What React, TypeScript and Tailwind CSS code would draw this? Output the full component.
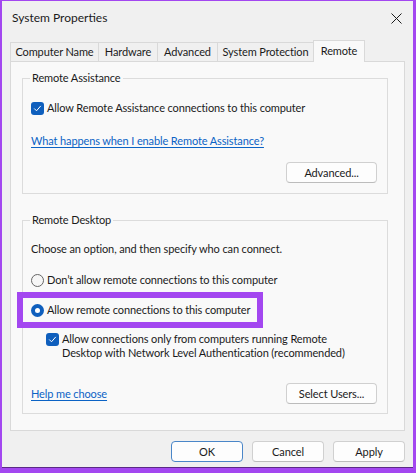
import React from 'react';

const FONT = "font-['Lato','Liberation_Sans',sans-serif]";

const TABS = [
  { label: 'Computer Name', width: 'w-[88px]' },
  { label: 'Hardware', width: 'w-[59px]' },
  { label: 'Advanced', width: 'w-[60px]' },
  { label: 'System Protection', width: 'w-[96px]' },
];

function CheckBox() {
  return (
    <span className="flex h-[13px] w-[13px] shrink-0 items-center justify-center rounded-[3px] bg-[#0f5fbd]">
      <svg width="9" height="9" viewBox="0 0 9 9" fill="none">
        <path d="M1.5 4.8 L3.5 6.8 L7.5 2.2" stroke="#ffffff" strokeWidth="1" strokeLinecap="round" strokeLinejoin="round" />
      </svg>
    </span>
  );
}

function Radio({ checked }: { checked?: boolean }) {
  if (checked) {
    return (
      <span className="flex h-[13px] w-[13px] shrink-0 items-center justify-center rounded-full bg-[#0f5fbd]">
        <span className="h-[5px] w-[5px] rounded-full bg-white" />
      </span>
    );
  }
  return <span className="h-[13px] w-[13px] shrink-0 rounded-full border border-[#666666] bg-[#f6f6f6]" />;
}

function Button({ children, primary }: { children: React.ReactNode; primary?: boolean }) {
  return (
    <button
      className={
        'flex h-[21px] w-full items-center justify-center rounded-[4px] border bg-[#fdfdfd] text-[#1b1b1b] ' +
        (primary ? 'border-[#4a86c8]' : 'border-[#d0d0d0] border-b-[#bcbcbc]')
      }
    >
      {children}
    </button>
  );
}

export default function App() {
  return (
    <div className={`h-[473px] w-[416px] bg-[#a347f0] pt-[1px] pl-[2px] pr-[3px] pb-[5px] ${FONT}`}>
      <div className="flex h-full flex-col border-b border-[#5b2a86] bg-[#f0f0f0] text-[11px] leading-[16px] tracking-[-0.12px] text-[#1b1b1b]">
        {/* title bar */}
        <div className="flex h-[33px] items-center justify-between pl-[10px] pr-[10px] pt-[1px]">
          <span className="text-[12px] tracking-normal">System Properties</span>
          <svg width="11" height="11" viewBox="0 0 11 11" className="mr-[1px]">
            <path d="M0.5 0.5 L10.5 10.5 M10.5 0.5 L0.5 10.5" stroke="#1b1b1b" strokeWidth="1" />
          </svg>
        </div>

        {/* tabs */}
        <div className="mt-[6px] flex h-[21px] items-end whitespace-nowrap pl-[8px]">
          {TABS.map((t) => (
            <div
              key={t.label}
              className={`flex h-[19px] items-center justify-center border border-b-0 border-r-0 border-[#d9d9d9] bg-[#f0f0f0] ${t.width}`}
            >
              {t.label}
            </div>
          ))}
          <div className="relative -mb-[1px] flex h-[22px] w-[52px] items-start justify-center border border-b-0 border-[#d9d9d9] bg-[#f9f9f9] pt-[2px]">
            Remote
          </div>
        </div>

        {/* panel */}
        <div className="mx-[8px] flex h-[370px] flex-col border border-[#d9d9d9] bg-[#f9f9f9] pl-[11px] pr-[16px] pt-[8px]">
          <fieldset className="h-[124px] border border-[#dcdcdc] px-[8px]">
            <legend className="-ml-[1px] px-[2px]">Remote Assistance</legend>
            <div className="mt-[14px] flex h-[16px] items-center gap-[3px]">
              <CheckBox />
              <span>Allow Remote Assistance connections to this computer</span>
            </div>
            <div className="mt-[17px] h-[16px]">
              <span className="text-[#0b63c5] underline decoration-[#0b63c5] underline-offset-[2px]">
                What happens when I enable Remote Assistance?
              </span>
            </div>
            <div className="mt-[13px] flex justify-end pr-[2px]">
              <div className="w-[91px]">
                <Button>Advanced...</Button>
              </div>
            </div>
          </fieldset>

          <fieldset className="mt-[18px] h-[202px] border border-[#dcdcdc] px-[8px]">
            <legend className="-ml-[1px] px-[2px]">Remote Desktop</legend>
            <div className="mt-[13px] h-[16px]">Choose an option, and then specify who can connect.</div>
            <div className="mt-[15px] flex h-[16px] items-center gap-[3px]">
              <Radio />
              <span>Don’t allow remote connections to this computer</span>
            </div>
            <div className="relative mt-[14px] flex h-[16px] items-center gap-[3px]">
              <span className="pointer-events-none absolute -left-[14px] -top-[10px] h-[36px] w-[246px] border-[6px] border-[#a347f0]" />
              <Radio checked />
              <span>Allow remote connections to this computer</span>
            </div>
            <div className="mt-[14px] flex items-start gap-[3px] pl-[15px] leading-[14px]">
              <span className="mt-[1px]">
                <CheckBox />
              </span>
              <span>
                Allow connections only from computers running Remote
                <br />
                Desktop with Network Level Authentication (recommended)
              </span>
            </div>
            <div className="mt-[23px] flex items-center justify-between pr-[2px]">
              <span className="text-[#0b63c5] underline decoration-[#0b63c5] underline-offset-[2px]">
                Help me choose
              </span>
              <div className="w-[91px]">
                <Button>Select Users...</Button>
              </div>
            </div>
          </fieldset>
        </div>

        {/* bottom buttons */}
        <div className="mt-[10px] flex justify-end gap-[9px] pr-[8px]">
          <div className="w-[72px]">
            <Button primary>OK</Button>
          </div>
          <div className="w-[72px]">
            <Button>Cancel</Button>
          </div>
          <div className="w-[72px]">
            <Button>Apply</Button>
          </div>
        </div>
      </div>
    </div>
  );
}
